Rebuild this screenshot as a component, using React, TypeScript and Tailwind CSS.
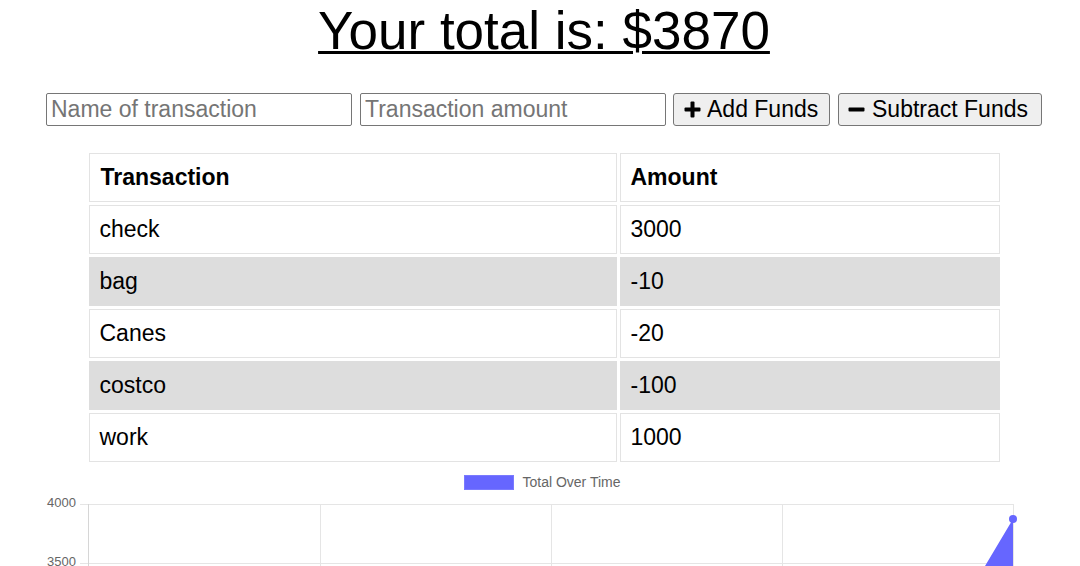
import { useState } from "react";

type Tx = { name: string; value: number };

const initial: Tx[] = [
  { name: "check", value: 3000 },
  { name: "bag", value: -10 },
  { name: "Canes", value: -20 },
  { name: "costco", value: -100 },
  { name: "work", value: 1000 },
];

function PlusIcon() {
  return (
    <svg width="17" height="17" viewBox="0 0 17 17" className="shrink-0">
      <rect x="6.5" y="0.5" width="4" height="16" rx="1" fill="#000" />
      <rect x="0.5" y="6.5" width="16" height="4" rx="1" fill="#000" />
    </svg>
  );
}

function MinusIcon() {
  return (
    <svg width="17" height="17" viewBox="0 0 17 17" className="shrink-0">
      <rect x="0.5" y="6.5" width="16" height="4" rx="1" fill="#000" />
    </svg>
  );
}

function Chart() {
  const xs = [88, 320, 551, 782, 1013];
  return (
    <div className="w-full">
      {/* legend */}
      <div className="flex items-center justify-center h-[16px] pl-[5px]">
        <span className="w-[50px] h-[15px] bg-[#6666ff] border border-[#7a7aff]" />
        <span className="ml-[8px] text-[14px] leading-[16px] text-[#666]">Total Over Time</span>
      </div>
      <svg width="1080" height="80" viewBox="0 0 1080 80" className="block mt-[2px]">
        {/* horizontal grid */}
        <line x1="80" y1="12.5" x2="1013" y2="12.5" stroke="#e5e5e5" strokeWidth="1" />
        <line x1="80" y1="71.5" x2="1013" y2="71.5" stroke="#e5e5e5" strokeWidth="1" />
        {/* vertical grid */}
        {xs.map((x) => (
          <line key={x} x1={x + 0.5} y1="12" x2={x + 0.5} y2="80" stroke={x === 88 ? "#d6d6d6" : "#e5e5e5"} strokeWidth="1" />
        ))}
        <text x="76" y="12" textAnchor="end" dominantBaseline="middle" fontSize="13" fill="#666" fontFamily="'Liberation Sans', Arial, sans-serif">
          4000
        </text>
        <text x="76" y="71" textAnchor="end" dominantBaseline="middle" fontSize="13" fill="#666" fontFamily="'Liberation Sans', Arial, sans-serif">
          3500
        </text>
        {/* data area */}
        <polygon points="782,415 1013,27 1013,200 782,200" fill="#6666ff" />
        <circle cx="1013" cy="27" r="4" fill="#6666ff" />
      </svg>
    </div>
  );
}

export default function App() {
  const [txs] = useState<Tx[]>(initial);
  const total = txs.reduce((s, t) => s + t.value, 0);

  return (
    <div className="min-h-screen bg-white text-black pl-2 font-['Liberation_Sans',Arial,sans-serif] overflow-hidden">
      <h1 className="text-center text-[53px] leading-[61px] font-normal">
        <span className="underline decoration-[3px]">Your total is: ${total}</span>
      </h1>

      <div className="mt-[32px] flex justify-center items-center text-[23px]">
        <input
          type="text"
          placeholder="Name of transaction"
          className="w-[306px] h-[33px] border border-[#767676] rounded-[2px] px-[4px] text-[23px] placeholder:text-[#757575] outline-none"
        />
        <input
          type="number"
          placeholder="Transaction amount"
          className="ml-[8px] w-[306px] h-[33px] border border-[#767676] rounded-[2px] px-[4px] text-[23px] placeholder:text-[#757575] outline-none"
        />
        <button className="ml-[7px] w-[157px] h-[33px] flex items-center gap-[6px] pl-[10px] bg-[#efefef] border border-[#767676] rounded-[3px]">
          <PlusIcon />
          <span>Add Funds</span>
        </button>
        <button className="ml-[8px] w-[204px] h-[33px] flex items-center gap-[7px] pl-[9px] bg-[#efefef] border border-[#767676] rounded-[3px]">
          <MinusIcon />
          <span>Subtract Funds</span>
        </button>
      </div>

      <table className="mt-[24px] mx-auto w-[917px] border-separate border-spacing-[3px] text-[23px]">
        <thead>
          <tr>
            <th className="w-[528px] h-[49px] border border-[#e3e3e3] px-[11px] text-left font-bold">Transaction</th>
            <th className="h-[49px] border border-[#e3e3e3] px-[10px] text-left font-bold">Amount</th>
          </tr>
        </thead>
        <tbody>
          {txs.map((t, i) => (
            <tr key={t.name} className={i % 2 === 1 ? "bg-[#dddddd]" : "bg-white"}>
              <td className={`h-[49px] border px-[10px] ${i % 2 === 1 ? "border-[#dddddd]" : "border-[#e3e3e3]"}`}>{t.name}</td>
              <td className={`h-[49px] border px-[10px] ${i % 2 === 1 ? "border-[#dddddd]" : "border-[#e3e3e3]"}`}>{t.value}</td>
            </tr>
          ))}
        </tbody>
      </table>

      <div className="mt-[9px] -ml-2">
        <Chart />
      </div>
    </div>
  );
}
